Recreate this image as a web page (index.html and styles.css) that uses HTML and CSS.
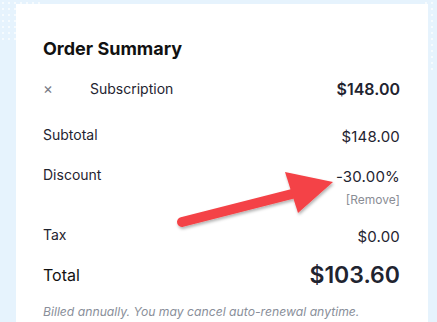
FILE: index.html
```html
<!DOCTYPE html>
<html>
<head>
<meta charset="utf-8">
<link rel="stylesheet" href="styles.css">
</head>
<body>
<div class="page">
  <div class="dots dots-left"></div>
  <div class="dots dots-right"></div>
  <div class="card">
    <h2 class="title">Order Summary</h2>
    <div class="row item">
      <span class="item-left"><span class="remove-x">×</span><span class="item-name">Subscription</span></span>
      <span class="item-price">$148.00</span>
    </div>
    <div class="row line subtotal">
      <span>Subtotal</span>
      <span class="val">$148.00</span>
    </div>
    <div class="row line discount">
      <span>Discount</span>
      <span class="val-col"><span class="val">-30.00%</span><span class="remove-link">[Remove]</span></span>
    </div>
    <div class="row line tax">
      <span>Tax</span>
      <span class="val">$0.00</span>
    </div>
    <div class="row total">
      <span class="total-label">Total</span>
      <span class="total-val">$103.60</span>
    </div>
    <p class="note">Billed annually. You may cancel auto-renewal anytime.</p>
  </div>
  <svg class="arrow" width="437" height="322" viewBox="0 0 437 322">
    <defs>
      <filter id="sh" x="-20%" y="-20%" width="140%" height="140%">
        <feDropShadow dx="1" dy="2" stdDeviation="1.5" flood-color="#000" flood-opacity="0.3"/>
      </filter>
    </defs>
    <g filter="url(#sh)">
      <line x1="182" y1="222" x2="292" y2="194" stroke="#f44346" stroke-width="10" stroke-linecap="round"/>
      <polygon points="285,172 333,182 298,213" fill="#f44346"/>
    </g>
  </svg>
</div>
</body>
</html>
```
FILE: styles.css
```css
html, body {
  margin: 0;
  padding: 0;
}
body {
  width: 437px;
  height: 322px;
  overflow: hidden;
  background: #e6f3fd;
  font-family: Inter, "Noto Sans", sans-serif;
  color: #1f2430;
}
.page {
  position: relative;
  width: 437px;
  height: 322px;
  padding: 4px 9px 0 16px;
  box-sizing: border-box;
  overflow: hidden;
}
.dots {
  position: absolute;
  top: 0;
  width: 40px;
  height: 40px;
  background-image: radial-gradient(circle, rgba(255,255,255,0.9) 0.8px, transparent 1.2px);
  background-size: 6px 6px;
  opacity: 0.7;
}
.dots-left { left: 0; }
.dots-right { right: 0; top: 0; height: 70px; width: 14px; }
.card {
  background: #fff;
  height: 318px;
  padding: 0 28px 0 27px;
  box-sizing: border-box;
  display: flex;
  flex-direction: column;
  overflow: hidden;
}
.title {
  margin: 33px 0 0;
  font-size: 18px;
  font-weight: 700;
  color: #111;
  line-height: 24px;
}
.row {
  display: flex;
  justify-content: space-between;
  align-items: flex-start;
}
.item {
  margin-top: 18px;
  align-items: center;
  line-height: 20px;
}
.item-left {
  display: flex;
  align-items: center;
}
.remove-x {
  width: 47px;
  color: #777a85;
  font-size: 15px;
}
.item-name {
  font-size: 14px;
  color: #1f2430;
}
.item-price {
  font-size: 16px;
  font-weight: 600;
  color: #1f2430;
}
.line {
  font-size: 14px;
  line-height: 20px;
}
.line .val {
  font-size: 15px;
  letter-spacing: 0.2px;
}
.subtotal { margin-top: 26px; }
.subtotal .val { margin-top: 2px; }
.discount { margin-top: 18px; }
.discount .val { margin-top: 2px; }
.val-col {
  display: flex;
  flex-direction: column;
  align-items: flex-end;
}
.remove-link {
  font-size: 12px;
  color: #8a8d95;
  line-height: 16px;
  margin-top: 5px;
}
.tax { margin-top: 17px; }
.tax .val { margin-top: 2px; }
.total {
  margin-top: 13px;
  align-items: center;
}
.total-label {
  font-size: 16px;
  font-weight: 400;
  color: #111;
}
.total-val {
  font-size: 23px;
  font-weight: 600;
  color: #1f2430;
  line-height: 30px;
}
.note {
  margin: 14px 0 0;
  font-size: 12.2px;
  line-height: 16px;
  font-style: italic;
  color: #8a8f9a;
  white-space: nowrap;
}
.arrow {
  position: absolute;
  left: 0;
  top: 0;
  pointer-events: none;
}
```
